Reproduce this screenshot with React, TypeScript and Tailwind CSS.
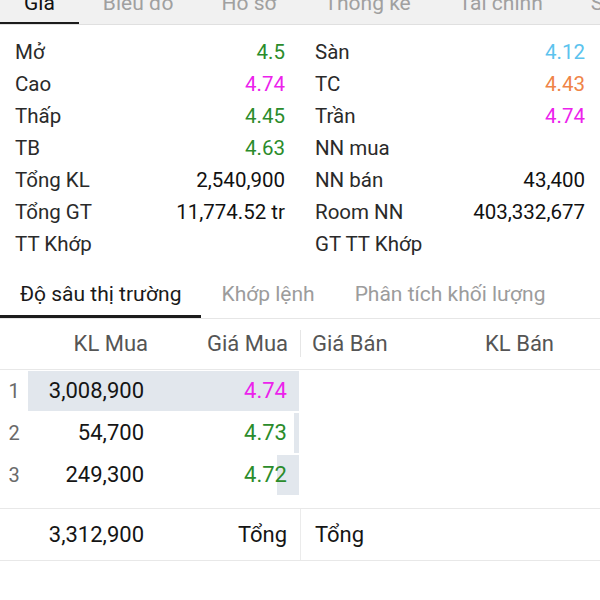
import React from "react";

const GREEN = "text-[#2b8c2b]";
const MAGENTA = "text-[#ec22ec]";
const CYAN = "text-[#5cc3ee]";
const ORANGE = "text-[#ef8447]";

type Item = { label: string; value: string; color?: string };

const leftInfo: Item[] = [
  { label: "Mở", value: "4.5", color: GREEN },
  { label: "Cao", value: "4.74", color: MAGENTA },
  { label: "Thấp", value: "4.45", color: GREEN },
  { label: "TB", value: "4.63", color: GREEN },
  { label: "Tổng KL", value: "2,540,900" },
  { label: "Tổng GT", value: "11,774.52 tr" },
  { label: "TT Khớp", value: "" },
];

const rightInfo: Item[] = [
  { label: "Sàn", value: "4.12", color: CYAN },
  { label: "TC", value: "4.43", color: ORANGE },
  { label: "Trần", value: "4.74", color: MAGENTA },
  { label: "NN mua", value: "" },
  { label: "NN bán", value: "43,400" },
  { label: "Room NN", value: "403,332,677" },
  { label: "GT TT Khớp", value: "" },
];

const topTabs = ["Giá", "Biểu đồ", "Hồ sơ", "Thống kê", "Tài chính", "Sự kiện"];
const subTabs = ["Độ sâu thị trường", "Khớp lệnh", "Phân tích khối lượng"];

const bids = [
  { vol: 3008900, price: "4.74", color: MAGENTA },
  { vol: 54700, price: "4.73", color: GREEN },
  { vol: 249300, price: "4.72", color: GREEN },
];

const fmt = (n: number) => n.toLocaleString("en-US");

function InfoCol({ items }: { items: Item[] }) {
  return (
    <div className="flex flex-col">
      {items.map((it) => (
        <div key={it.label} className="flex h-[32px] items-center justify-between leading-[32px]">
          <span className="text-[#2a2a2a]">{it.label}</span>
          <span className={it.color ?? "text-[#111]"}>{it.value}</span>
        </div>
      ))}
    </div>
  );
}

export default function App() {
  const max = Math.max(...bids.map((b) => b.vol));
  return (
    <div
      className="w-[600px] h-[600px] overflow-hidden bg-white"
      style={{ fontFamily: "Roboto, 'Noto Sans', sans-serif" }}
    >
      {/* top tabs */}
      <div className="flex h-[25px] overflow-hidden bg-[#f1f1f1] border-b border-[#e0e0e0]">
        {topTabs.map((t, i) => (
          <div
            key={t}
            className={`flex-none h-[25px] px-[24px] text-[21px] leading-[21px] ${
              i === 0 ? "border-b-[3px] border-[#1c1c1c] text-[#111]" : "text-[#a0a0a0]"
            }`}
          >
            <span className="block -mt-[7px] whitespace-nowrap">{t}</span>
          </div>
        ))}
      </div>

      {/* info */}
      <div className="grid grid-cols-2 gap-x-[30px] px-[15px] pt-[11px] text-[20.5px]">
        <InfoCol items={leftInfo} />
        <InfoCol items={rightInfo} />
      </div>

      {/* sub tabs */}
      <div className="flex border-b border-[#e6e6e6] pt-[24px] text-[21px] leading-[21px]">
        {subTabs.map((t, i) => (
          <div
            key={t}
            className={`px-[20px] pb-[10px] whitespace-nowrap ${
              i === 0 ? "border-b-[3px] border-[#1c1c1c] text-[#1a1a1a]" : "border-b-[3px] border-transparent text-[#9c9c9c]"
            }`}
          >
            {t}
          </div>
        ))}
      </div>

      {/* table header */}
      <div className="flex h-[51px] border-b border-[#e8e8e8] text-[22px] leading-[50px] text-[#555]">
        <div className="flex w-[300px]">
          <div className="w-[28px]" />
          <div className="w-[120px] text-right">KL Mua</div>
          <div className="flex-1 text-right pr-[12px]">Giá Mua</div>
        </div>
        <div className="w-px h-[27px] mt-[11px] bg-[#e6e6e6]" />
        <div className="flex flex-1">
          <div className="pl-[11px]">Giá Bán</div>
          <div className="flex-1 text-right pr-[46px]">KL Bán</div>
        </div>
      </div>

      {/* rows */}
      <div className="flex flex-col pb-[12px] border-b border-[#e8e8e8] text-[22px] leading-[42px]">
        {bids.map((b, i) => (
          <div key={i} className="flex h-[42px]">
            <div className="flex w-[300px]">
              <div className="w-[28px] text-center text-[20px] text-[#6a6a6a]">{i + 1}</div>
              <div className="relative flex flex-1">
                <div
                  className="absolute right-[1px] top-[1px] bottom-[1px] bg-[#e2e7ed]"
                  style={{ width: `${(b.vol / max) * 271}px` }}
                />
                <div className="relative w-[116px] text-right text-[#151515]">{fmt(b.vol)}</div>
                <div className={`relative flex-1 text-right pr-[13px] ${b.color}`}>{b.price}</div>
              </div>
            </div>
            <div className="flex-1" />
          </div>
        ))}
      </div>

      {/* totals */}
      <div className="flex h-[52px] border-b border-[#e8e8e8] text-[22px] leading-[51px] text-[#151515]">
        <div className="flex w-[300px]">
          <div className="w-[28px]" />
          <div className="w-[116px] text-right">3,312,900</div>
          <div className="flex-1 text-right pr-[13px]">Tổng</div>
        </div>
        <div className="w-px bg-[#ebebeb]" />
        <div className="flex-1 pl-[14px]">Tổng</div>
      </div>
    </div>
  );
}
